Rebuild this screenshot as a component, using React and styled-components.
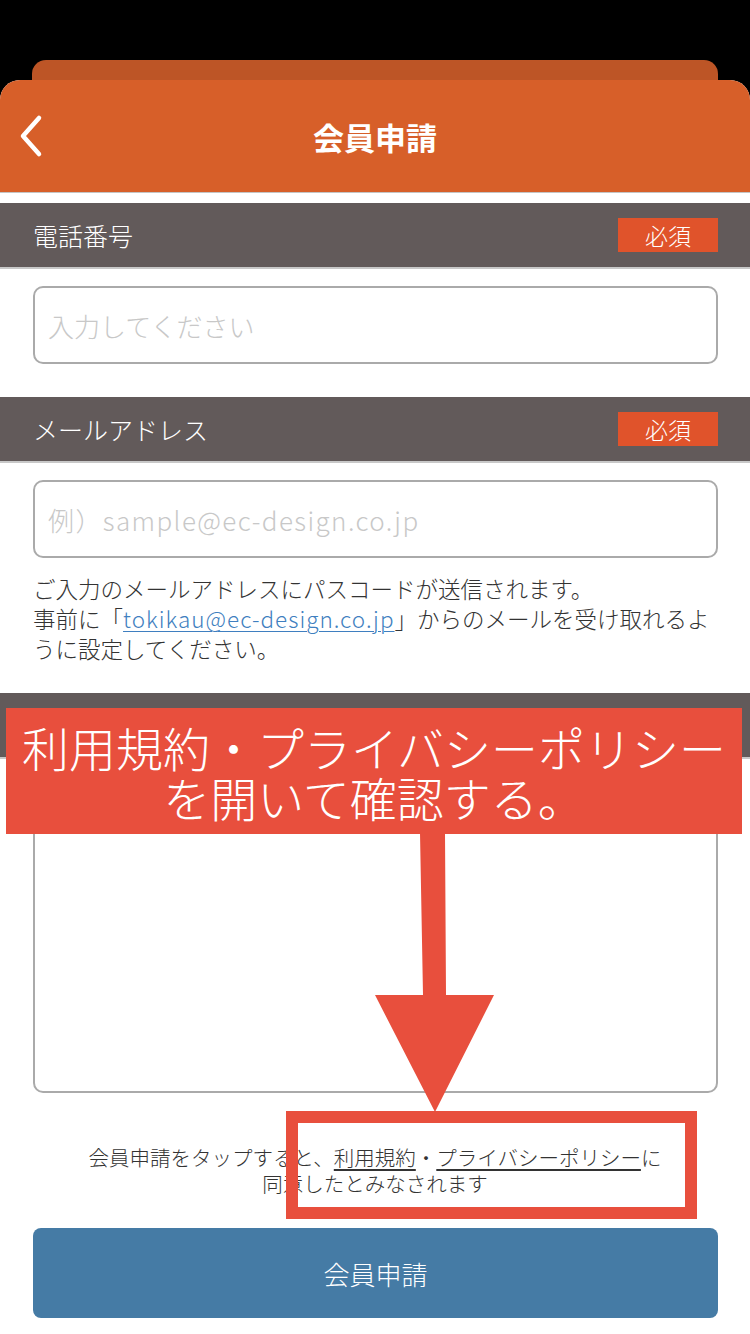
import React from "react";
import styled, { createGlobalStyle } from "styled-components";

const Global = createGlobalStyle`
  html, body { margin: 0; padding: 0; background: #000; }
  body { font-family: "Noto Sans CJK JP", "Noto Sans", sans-serif; }
  * { box-sizing: border-box; }
`;

const Page = styled.div`
  position: relative;
  width: 750px;
  height: 1334px;
  overflow: hidden;
  background: #000;
  display: flex;
  flex-direction: column;
`;

const TopArea = styled.div`
  height: 80px;
  padding: 60px 32px 0;
  display: flex;
`;

const BackCard = styled.div`
  flex: 1;
  background: #bd5526;
  border-radius: 14px 14px 0 0;
`;

const Sheet = styled.div`
  flex: 1;
  background: #fff;
  border-radius: 20px 20px 0 0;
  overflow: hidden;
  display: flex;
  flex-direction: column;
`;

const Header = styled.header`
  position: relative;
  height: 113px;
  background: #d75f29;
  border-bottom: 1px solid #c4c4c4;
  display: flex;
  align-items: center;
  justify-content: center;
  flex-shrink: 0;
`;

const BackBtn = styled.div`
  position: absolute;
  left: 14px;
  top: 34px;
  width: 32px;
  height: 44px;
  display: flex;
  align-items: center;
  justify-content: center;
`;

const Title = styled.h1`
  margin: 0;
  color: #fff;
  font-size: 31px;
  font-weight: 700;
`;

const Spacer = styled.div`
  height: ${(p) => p.h}px;
  flex-shrink: 0;
`;

const SectionHead = styled.div`
  height: 66px;
  background: #625a5a;
  border-bottom: 2px solid #c8c8c8;
  padding: 0 32px 0 33px;
  display: flex;
  align-items: center;
  justify-content: space-between;
  flex-shrink: 0;
`;

const Label = styled.span`
  color: #fff;
  font-size: 25px;
  font-weight: 300;
`;

const Badge = styled.span`
  width: 100px;
  height: 34px;
  background: #e0532b;
  color: #fff;
  font-size: 23px;
  font-weight: 300;
  display: flex;
  align-items: center;
  justify-content: center;
`;

const Field = styled.div`
  padding: ${(p) => p.pt}px 32px 0 33px;
  flex-shrink: 0;
`;

const Input = styled.input`
  display: block;
  width: 100%;
  height: 78px;
  border: 2px solid #aaaaaa;
  border-radius: 10px;
  padding: 0 13px;
  font-family: "Noto Sans CJK JP", "Noto Sans", sans-serif;
  font-size: 26px;
  font-weight: 300;
  letter-spacing: ${(p) => p.$spacing || 0}px;
  color: #333;
  background: #fff;
  outline: none;
  &::placeholder { color: #c8c8c8; }
`;

const TextArea = styled.textarea`
  display: block;
  width: 100%;
  height: 317px;
  border: 2px solid #aaaaaa;
  border-radius: 10px;
  resize: none;
  background: #fff;
  outline: none;
`;

const Note = styled.div`
  padding: 15px 32px 0 33px;
  color: #333;
  font-size: 22.5px;
  font-weight: 300;
  line-height: 30px;
  flex-shrink: 0;
`;

const Line = styled.span`
  display: block;
  white-space: nowrap;
`;

const MailLink = styled.a`
  color: #3f7fc0;
  letter-spacing: 1px;
  text-decoration: underline;
  text-decoration-thickness: 1px;
  text-underline-offset: 3px;
`;

const Agreement = styled.div`
  margin-top: 51px;
  text-align: center;
  color: #333;
  font-size: 20.5px;
  font-weight: 300;
  line-height: 26px;
  flex-shrink: 0;
`;

const TermLink = styled.span`
  text-decoration: underline;
  text-decoration-thickness: 2px;
  text-underline-offset: 3px;
`;

const SubmitWrap = styled.div`
  padding: 32px 32px 0 33px;
  flex-shrink: 0;
`;

const Submit = styled.button`
  width: 100%;
  height: 90px;
  border: none;
  border-radius: 8px;
  background: #457ba5;
  color: #fff;
  font-family: "Noto Sans CJK JP", "Noto Sans", sans-serif;
  font-size: 26px;
  font-weight: 300;
`;

const Callout = styled.div`
  position: absolute;
  left: 6px;
  top: 708px;
  width: 736px;
  height: 126px;
  background: #e84f3d;
  color: #fff;
  text-align: center;
  font-size: 47px;
  line-height: 50px;
  padding-top: 14px;
  white-space: nowrap;
  font-weight: 300;
`;

const ArrowSvg = styled.svg`
  position: absolute;
  left: 0;
  top: 0;
  pointer-events: none;
`;

const Highlight = styled.div`
  position: absolute;
  left: 286px;
  top: 1111px;
  width: 411px;
  height: 108px;
  border: 12px solid #e84f3d;
`;

export default function App() {
  return (
    <>
      <Global />
      <Page>
        <TopArea>
          <BackCard />
        </TopArea>
        <Sheet>
          <Header>
            <BackBtn>
              <svg width="30" height="44" viewBox="0 0 30 44">
                <path d="M24 4 L8 22 L24 40" fill="none" stroke="#fff" strokeWidth="4.5" strokeLinecap="round" strokeLinejoin="round" />
              </svg>
            </BackBtn>
            <Title>会員申請</Title>
          </Header>
          <Spacer h={10} />
          <SectionHead>
            <Label>電話番号</Label>
            <Badge>必須</Badge>
          </SectionHead>
          <Field pt={17}>
            <Input placeholder="入力してください" />
          </Field>
          <Spacer h={33} />
          <SectionHead>
            <Label>メールアドレス</Label>
            <Badge>必須</Badge>
          </SectionHead>
          <Field pt={17}>
            <Input $spacing={1.4} placeholder="例）sample@ec-design.co.jp" />
          </Field>
          <Note>
            <Line>ご入力のメールアドレスにパスコードが送信されます。</Line>
            <Line>
              事前に「<MailLink>tokikau@ec-design.co.jp</MailLink>」からのメールを受け取れるよ
            </Line>
            <Line>うに設定してください。</Line>
          </Note>
          <Spacer h={30} />
          <SectionHead />
          <Field pt={17}>
            <TextArea />
          </Field>
          <Agreement>
            会員申請をタップすると、<TermLink>利用規約</TermLink>・<TermLink>プライバシーポリシー</TermLink>に
            <br />
            同意したとみなされます
          </Agreement>
          <SubmitWrap>
            <Submit>会員申請</Submit>
          </SubmitWrap>
        </Sheet>

        <Callout>
          利用規約・プライバシーポリシー
          <br />
          を開いて確認する。
        </Callout>
        <ArrowSvg width="750" height="1334" viewBox="0 0 750 1334">
          <polygon points="420,833 445,833 446,995 494,995 435,1112 375,995 423,995" fill="#e84f3d" />
        </ArrowSvg>
        <Highlight />
      </Page>
    </>
  );
}
